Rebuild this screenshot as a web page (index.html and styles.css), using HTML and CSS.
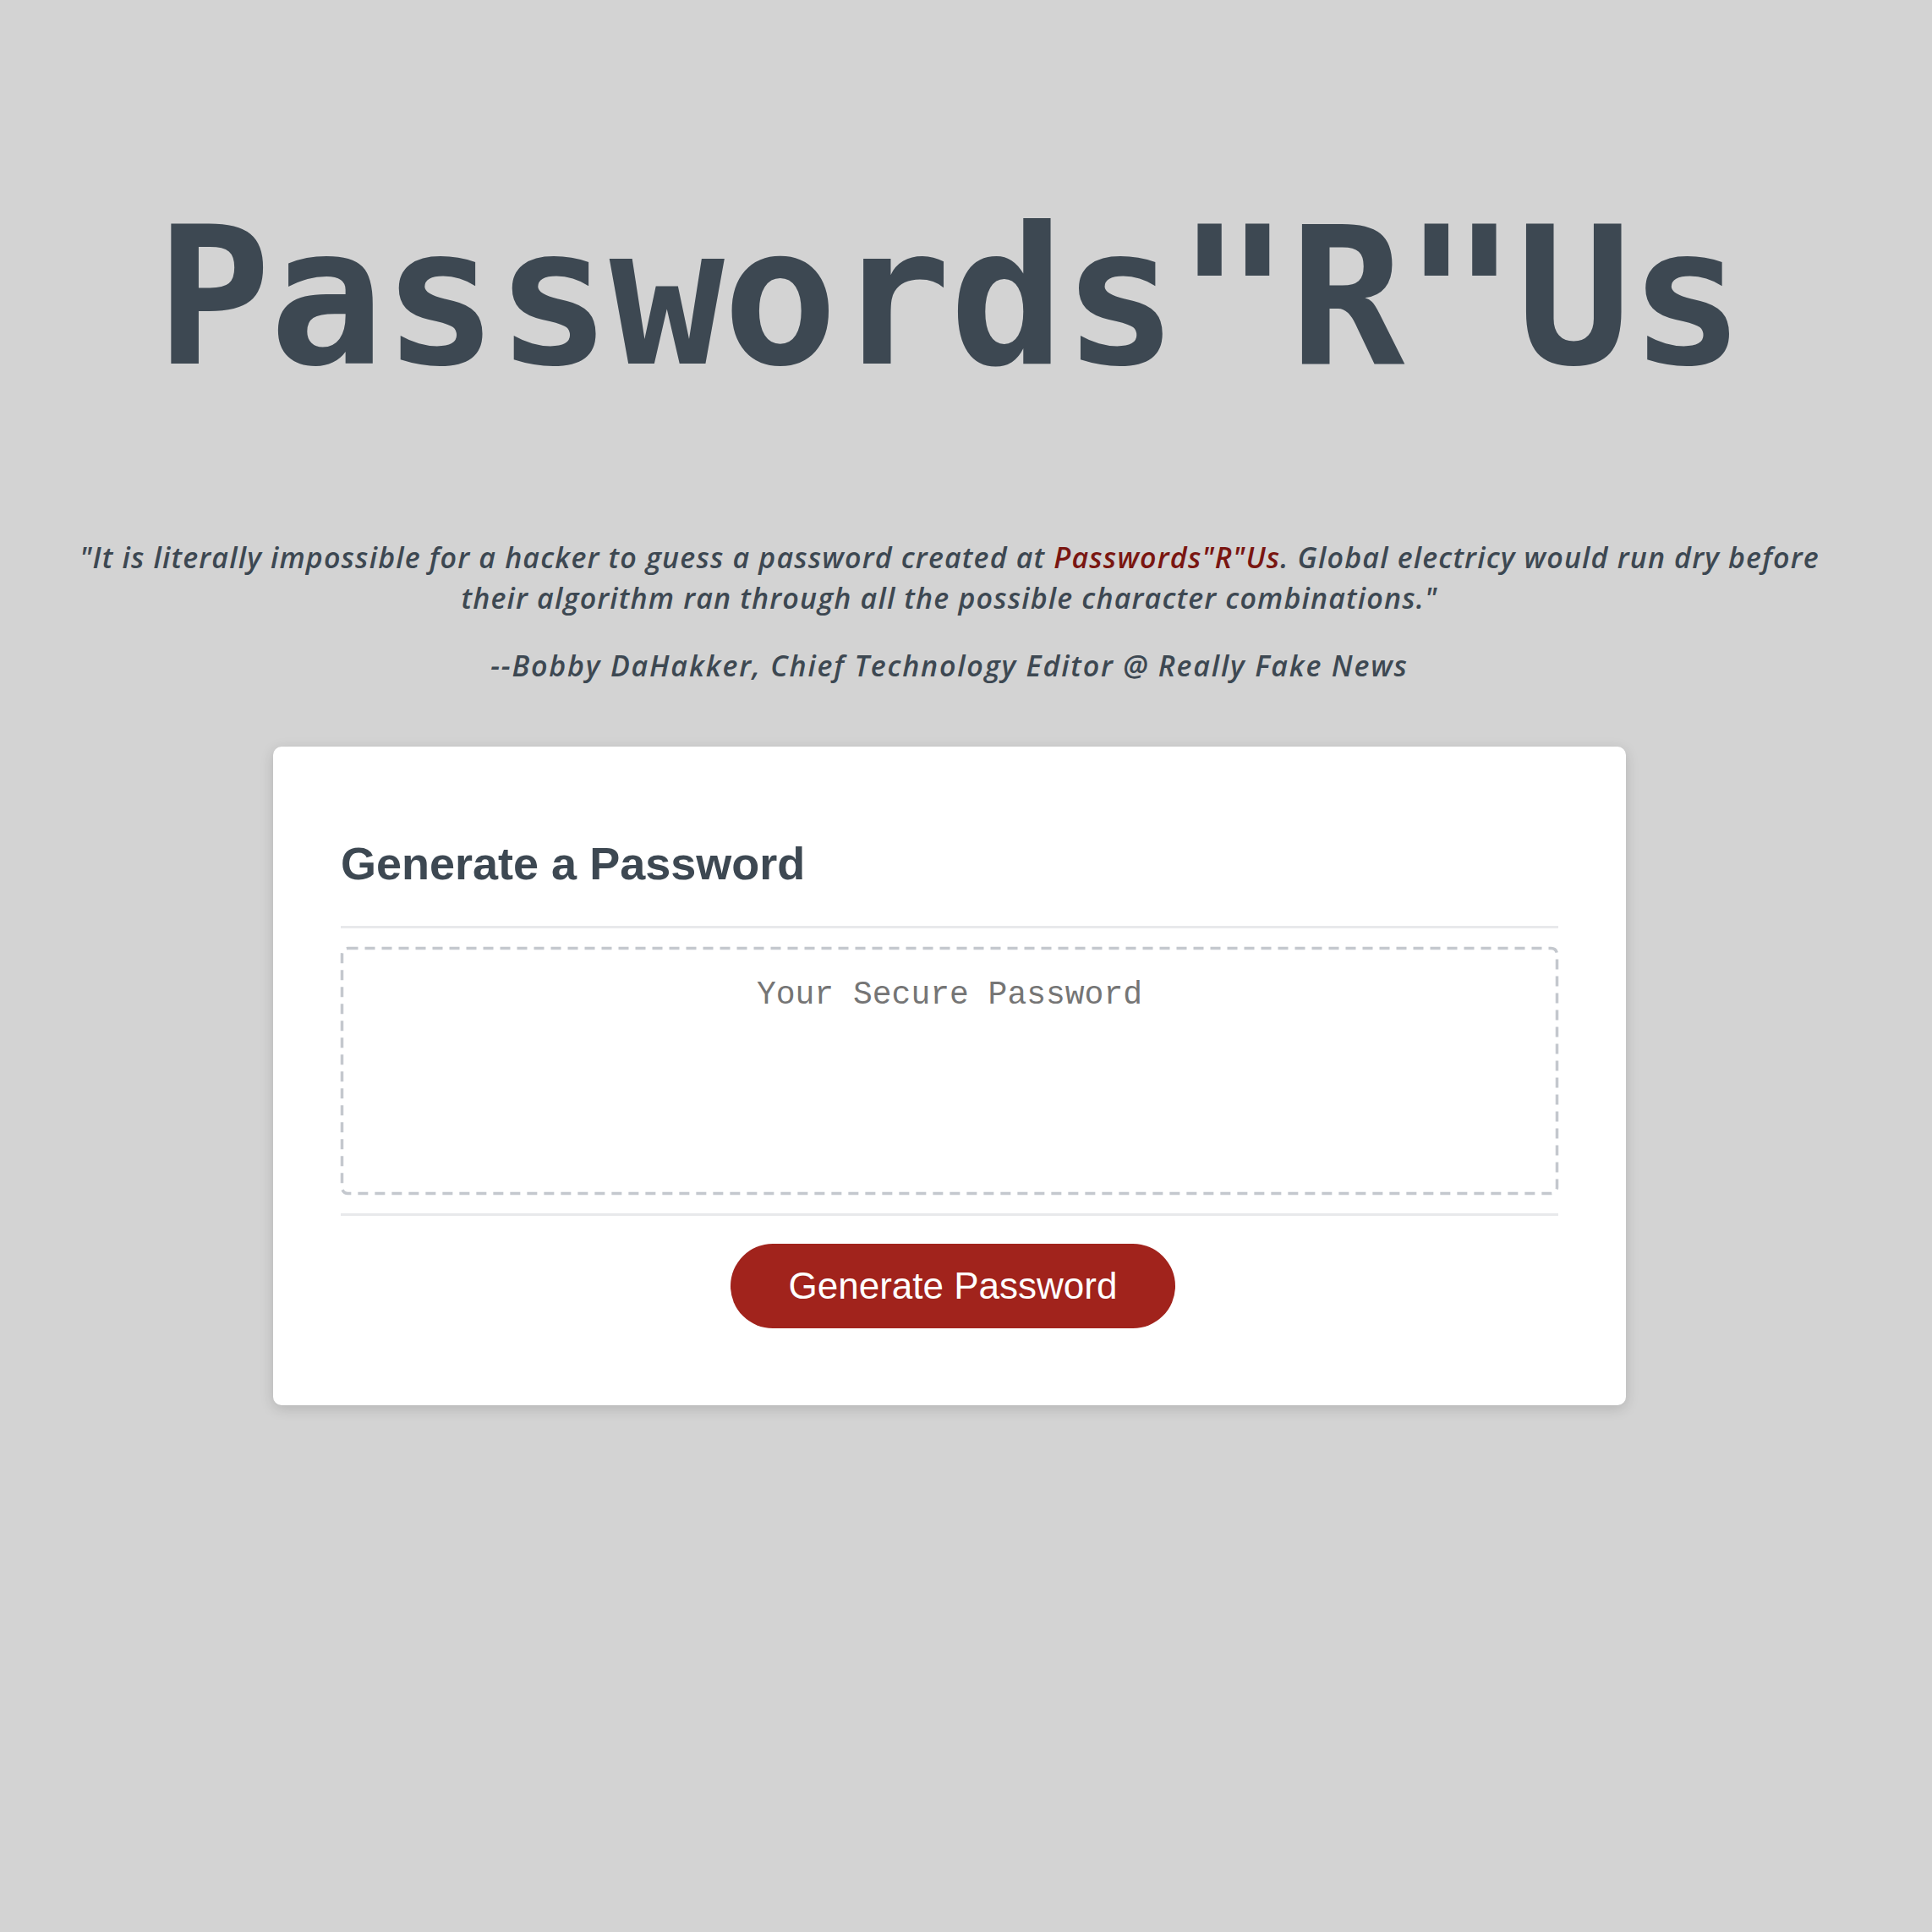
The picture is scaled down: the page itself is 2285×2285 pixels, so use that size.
FILE: index.html
```html
<!DOCTYPE html>
<html lang="en">
<head>
<meta charset="utf-8">
<title>Passwords"R"Us</title>
<link rel="stylesheet" href="styles.css">
</head>
<body>
<div class="page">
  <header class="hero">
    <h1 class="title">Passwords"R"Us</h1>
    <p class="quote">"It is literally impossible for a hacker to guess a password created at <span class="brand">Passwords"R"Us</span>. Global electricy would run dry before<br>their algorithm ran through all the possible character combinations."</p>
    <p class="attribution">--Bobby DaHakker, Chief Technology Editor @ Really Fake News</p>
  </header>
  <main class="card">
    <h2 class="card-title">Generate a Password</h2>
    <div class="card-body">
      <div class="field">
        <textarea class="password" readonly placeholder="Your Secure Password" aria-label="Generated Password"></textarea>
        <svg class="field-border" aria-hidden="true"><rect class="field-rect" rx="7" ry="7"></rect></svg>
      </div>
    </div>
    <div class="card-footer">
      <button class="btn" type="button">Generate Password</button>
    </div>
  </main>
</div>
</body>
</html>
```

FILE: styles.css
```css
* {
  box-sizing: border-box;
}

html, body {
  margin: 0;
  padding: 0;
}

body {
  background: #d3d3d3;
  color: #3c4650;
  min-height: 2285px;
}

.page {
  display: flex;
  flex-direction: column;
  align-items: center;
  padding-right: 39px;
}

.hero {
  display: flex;
  flex-direction: column;
  align-items: center;
  text-align: center;
}

.title {
  margin: 0;
  padding-top: 239px;
  font-family: "DejaVu Sans Mono", monospace;
  font-weight: 700;
  font-size: 226px;
  line-height: 226px;
  letter-spacing: -2px;
  color: #3d4852;
  white-space: nowrap;
}

.quote,
.attribution {
  font-family: "Open Sans", sans-serif;
  font-style: italic;
  font-weight: 600;
  font-size: 34px;
  line-height: 48px;
  color: #3d4852;
}

.quote {
  margin: 170px 0 0;
  white-space: nowrap;
  letter-spacing: 1.15px;
}

.brand {
  color: #7a1611;
}

.attribution {
  margin: 32px 0 0;
  letter-spacing: 1.8px;
}

.card {
  width: 1600px;
  margin-top: 72px;
  background: #ffffff;
  border-radius: 10px;
  box-shadow: 0 4px 16px rgba(0, 0, 0, 0.15);
  padding: 105px 80px 91px;
  display: flex;
  flex-direction: column;
}

.card-title {
  margin: 0 0 41px;
  font-family: "Liberation Sans", Arial, sans-serif;
  font-weight: 700;
  font-size: 54px;
  line-height: 66px;
  color: #3d4852;
}

.card-body {
  border-top: 3px solid #e8e9eb;
  border-bottom: 3px solid #e8e9eb;
  padding: 22px 0;
}

.field {
  position: relative;
  height: 293px;
}

.password {
  display: block;
  width: 100%;
  height: 100%;
  margin: 0;
  border: none;
  border-radius: 8px;
  padding: 35px 24px 24px;
  font-family: "Liberation Mono", "Courier New", monospace;
  font-size: 38px;
  line-height: 43px;
  text-align: center;
  resize: none;
  overflow: hidden;
  outline: none;
  color: #333;
  background: #fff;
}

.password::placeholder {
  color: #757575;
  opacity: 1;
}

.field-border {
  position: absolute;
  inset: 0;
  width: 100%;
  height: 100%;
  pointer-events: none;
  overflow: visible;
}

.field-rect {
  x: 1.5px;
  y: 1.5px;
  width: calc(100% - 3px);
  height: calc(100% - 3px);
  fill: none;
  stroke: #c4c8ce;
  stroke-width: 3.5px;
  stroke-dasharray: 12 8;
}

.card-footer {
  display: flex;
  justify-content: center;
  padding-top: 33px;
}

.btn {
  height: 100px;
  margin-left: 8px;
  padding: 0 69px;
  border: none;
  border-radius: 50px;
  background: #a1231c;
  color: #ffffff;
  font-family: "Liberation Sans", Arial, sans-serif;
  font-size: 44px;
  line-height: 50px;
  cursor: pointer;
}
```
